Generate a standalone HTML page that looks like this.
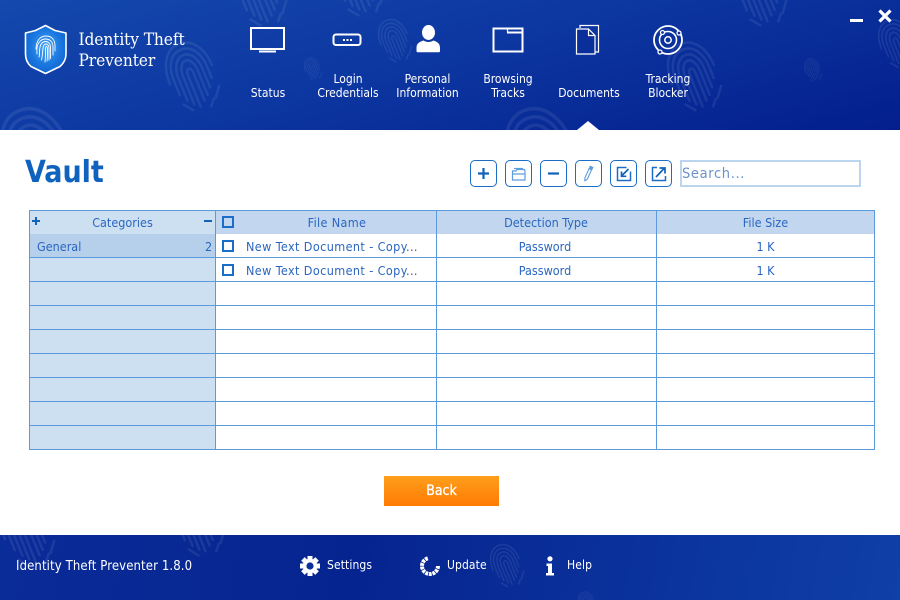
<!DOCTYPE html>
<html><head><meta charset="utf-8">
<style>
html,body{margin:0;padding:0}
body{width:900px;height:600px;position:relative;overflow:hidden;background:#fff;font-family:"DejaVu Sans","Liberation Sans",sans-serif;font-stretch:condensed}
.a{position:absolute}
#hd{left:0;top:0;width:900px;height:130px;background:linear-gradient(165deg,#1449ad 0%,#0c35a0 50%,#031f8c 100%);overflow:hidden}
#ft{left:0;top:535px;width:900px;height:65px;background:linear-gradient(100deg,#0a2c98 0%,#06248f 40%,#0f3fa8 100%);overflow:hidden}
.nav{position:absolute;color:#fff;font-size:12px;line-height:14px;text-align:center;width:90px}
.fl{color:#fff;font-size:12px;line-height:14px;position:absolute;letter-spacing:.1px}
.btn{position:absolute;top:160px;width:25px;height:25px;border:1.5px solid #1a6ec8;border-radius:5px;background:#fff}
.btn svg{position:absolute;left:0;top:0}
.t{position:absolute;color:#2a66c0;font-size:12.5px;line-height:24px;height:24px}
.c{text-align:center}
.h{position:absolute;background:#5b9bdc;height:1px;left:29px;width:846px}
.v{position:absolute;background:#5b9bdc;width:1px;top:210px;height:240px}
.cb{position:absolute;width:8px;height:8px;border:2px solid #1a6ec8;background:#fff}
</style></head><body>
<svg width="0" height="0" style="position:absolute"><defs>
<g id="fp" fill="none" stroke="#fff" stroke-width="2.500" stroke-linecap="round">
<g transform="rotate(-22 25 35)">
<path d="M3 36C3 16 12 2 26 2s23 14 23 32"/>
<path d="M8 50V34C8 18 15 8 26 8s18 11 18 26v12"/>
<path d="M13 58V34c0-11 5-20 13-20s13 9 13 20v20"/>
<path d="M18 64V34c0-7 3-14 8-14s8 7 8 14v26"/>
<path d="M23 68V34c0-7 6-7 6 0v30"/>
<path d="M40 66l8-10M33 72l5-6M8 60l7 9"/>
</g></g></defs></svg>

<svg class="a" style="left:0;top:130px" width="900" height="405" opacity="0.04">
<use href="#fp" transform="translate(0 258) scale(.8)"/>
<use href="#fp" transform="translate(170 370) scale(.9)"/>
<use href="#fp" transform="translate(285 18) scale(.5)"/>
<use href="#fp" transform="translate(95 165) scale(.6)"/>
<use href="#fp" transform="translate(100 250) scale(.8)"/>
<use href="#fp" transform="translate(370 340) scale(.5)"/>
<use href="#fp" transform="translate(480 260) scale(.8)"/>
<use href="#fp" transform="translate(650 200) scale(.8)"/>
<use href="#fp" transform="translate(735 20) scale(.5)"/>
<use href="#fp" transform="translate(815 340) scale(.8)"/>
<use href="#fp" transform="translate(545 30) scale(.5)"/>
<use href="#fp" transform="translate(825 60) scale(.7)"/>
</svg>

<div id="hd" class="a">
<svg class="a" style="left:0;top:0" width="900" height="130" opacity="0.075">
<use href="#fp" transform="translate(165 40)"/>
<use href="#fp" transform="translate(667 40)"/>
<use href="#fp" transform="translate(232 -45)"/>
<use href="#fp" transform="translate(732 -45)"/>
<use href="#fp" transform="translate(378 18) scale(.62)"/>
<use href="#fp" transform="translate(304 57) scale(.33)"/>
<use href="#fp" transform="translate(804 58) scale(.33)"/>
<use href="#fp" transform="translate(878 18) scale(.7)"/>
<use href="#fp" transform="translate(0 105) scale(1.4)"/>
<use href="#fp" transform="translate(505 105) scale(1.4)"/>
<use href="#fp" transform="translate(330 -55)"/>
</svg>

<svg class="a" style="left:24px;top:24px" width="44" height="52" viewBox="0 0 44 52">
<defs><radialGradient id="sg" cx=".5" cy=".45" r=".6"><stop offset="0" stop-color="#4aa6f6"/><stop offset=".6" stop-color="#1b78e0"/><stop offset="1" stop-color="#0f62cf"/></radialGradient></defs>
<path d="M21.500 1.500L31 6.500l11 2.500v21c0 5-2 9-6 12.500L21.500 49.500 7 42.500C3 39 1.500 35 1.500 30V9l10-2.500z" fill="url(#sg)" stroke="#fff" stroke-width="1.600" stroke-linejoin="round"/>
<g fill="none" stroke="#fff" stroke-width=".9" stroke-linecap="round">
<path d="M12 25c0-8 4-13 10-13s9 4 9 10v5"/><path d="M13 30c0-2-.300-4 0-6 .500-5 4-9 8.500-9s7.500 3 7.500 8v8"/><path d="M15 33c1-3 0-6 1-10s3-5.500 5.500-5.500 5 2 5 6v11"/><path d="M17.500 36c1-4 1-8 1.500-12s2-4 3-4 3 1 3 4v12"/><path d="M21 38c.500-4 .500-9 .500-13s2-3 2 0c0 5 0 9-.500 12"/>
</g></svg>
<div class="a" style="left:78.500px;top:30px;color:#fff;font:17.200px/21px 'DejaVu Serif','Liberation Serif',serif;font-stretch:condensed;white-space:nowrap;letter-spacing:-.1px">Identity Theft<br>Preventer</div>

<!-- Status -->
<svg class="a" style="left:250px;top:27px" width="36" height="26" viewBox="0 0 36 26"><rect x="1" y="1" width="33" height="21" fill="none" stroke="#fff" stroke-width="2"/><rect x="9" y="23.500" width="17" height="2" fill="#fff"/></svg>
<!-- Login -->
<svg class="a" style="left:332px;top:33px" width="32" height="14" viewBox="0 0 32 14"><rect x="1.500" y="1.500" width="27" height="10.500" rx="2.500" fill="none" stroke="#fff" stroke-width="2"/><rect x="11" y="6" width="2" height="2" fill="#fff"/><rect x="14.500" y="6" width="2" height="2" fill="#fff"/><rect x="18" y="6" width="2" height="2" fill="#fff"/></svg>
<!-- Person -->
<svg class="a" style="left:416px;top:24px" width="24" height="32" viewBox="0 0 24 32"><ellipse cx="12.500" cy="8.500" rx="6.500" ry="7.500" fill="#fff"/><path d="M0.500 24c0-5 3-6 7-7.500 3 2 7 2 10 0 4 1.500 6.500 3 6.500 7.500v3c0 .8-.5 1.300-1.500 1.300H2c-1 0-1.500-.5-1.500-1.300z" fill="#fff"/></svg>
<!-- Browsing -->
<svg class="a" style="left:492px;top:27px" width="32" height="26" viewBox="0 0 32 26"><path d="M1.500 1.500h29v23h-29z" fill="none" stroke="#fff" stroke-width="2"/><path d="M15 5.500h15" fill="none" stroke="#fff" stroke-width="2"/><path d="M15.500 2v3.500" stroke="#fff" stroke-width="1.200"/></svg>
<!-- Documents -->
<svg class="a" style="left:575px;top:24px" width="26" height="32" viewBox="0 0 26 32" fill="none" stroke="#fff" stroke-width="1.200"><path d="M5 4V1.500h18.500v26.500H20"/><path d="M1.500 5h12l6.500 6.500v18.500H1.500z" fill="#0a2f9b"/><path d="M13.500 5v6.500H20" /></svg>
<!-- Tracking -->
<svg class="a" style="left:652px;top:24px" width="32" height="32" viewBox="0 0 32 32" fill="none" stroke="#fff"><circle cx="16" cy="16" r="14" stroke-width="1.800"/><circle cx="16" cy="16" r="8.500" stroke-width="1.600"/><circle cx="16" cy="16" r="3.200" stroke-width="1.500"/><circle cx="10.500" cy="8.500" r="2" fill="#0c2f9a" stroke-width="1.300"/><circle cx="27" cy="9" r="2" fill="#0c2f9a" stroke-width="1.300"/><circle cx="8" cy="28" r="2" fill="#0c2f9a" stroke-width="1.300"/></svg>

<div class="nav" style="left:223px;top:86px">Status</div>
<div class="nav" style="left:303px;top:72px">Login<br>Credentials</div>
<div class="nav" style="left:382.500px;top:72px">Personal<br>Information</div>
<div class="nav" style="left:463px;top:72px">Browsing<br>Tracks</div>
<div class="nav" style="left:544px;top:86px">Documents</div>
<div class="nav" style="left:623px;top:72px">Tracking<br>Blocker</div>

<div class="a" style="left:850px;top:19px;width:13px;height:3px;background:#fff"></div>
<svg class="a" style="left:878px;top:9px" width="14" height="14" viewBox="0 0 14 14"><path d="M1.500 1.500l11 11M12.500 1.500l-11 11" stroke="#fff" stroke-width="3.200" fill="none"/></svg>
<div class="a" style="left:577px;top:121px;width:0;height:0;border-left:11px solid transparent;border-right:11px solid transparent;border-bottom:9px solid #fff"></div>
</div>

<div class="a" style="left:25px;top:153px;color:#0f62bd;font:bold 30px/40px 'DejaVu Sans','Liberation Sans',sans-serif;font-stretch:condensed">Vault</div>

<div class="btn" style="left:470px"><svg width="25" height="25" viewBox="0 0 25 25"><path d="M7 12.500h11M12.500 7v11" stroke="#1262b8" stroke-width="2.200"/></svg></div>
<div class="btn" style="left:505px"><svg width="25" height="25" viewBox="0 0 25 25" fill="none" stroke="#5f9cdc" stroke-width="1.200"><path d="M6.500 19V10h3.500l1-1.500h7.500l.5 1.500v9zM6.500 13h12.500"/><path d="M8 7.500h9"/></svg></div>
<div class="btn" style="left:540px"><svg width="25" height="25" viewBox="0 0 25 25"><path d="M7 12.500h11" stroke="#1262b8" stroke-width="2.200"/></svg></div>
<div class="btn" style="left:575px"><svg width="25" height="25" viewBox="0 0 25 25" fill="none" stroke="#5f9cdc" stroke-width="1.100"><path d="M9.500 19.500l-.8 .2.300-3 4-9 2.500 1.200-4 9z"/><path d="M13.500 7l.8-1.800 2.500 1.200-.8 1.800z" fill="#5f9cdc"/></svg></div>
<div class="btn" style="left:610px"><svg width="25" height="25" viewBox="0 0 25 25" fill="none" stroke="#1a6ec8" stroke-width="1.500"><path d="M15.500 6.500h-9v13h13v-9"/><path d="M17.500 8l-7 7M10.500 10.500v4.800h4.800" stroke="#1262b8" stroke-width="1.700"/></svg></div>
<div class="btn" style="left:645px"><svg width="25" height="25" viewBox="0 0 25 25" fill="none" stroke="#1a6ec8" stroke-width="1.500"><path d="M11 6.500H6.500v13h13V15"/><path d="M10 16l8-8.500M13.500 7H19v5.500" stroke="#1262b8" stroke-width="1.700"/></svg></div>

<div class="a" style="left:680px;top:160px;width:177px;height:23px;border:2px solid #bcd5ee;background:#fff;color:#6b93c9;font-size:14.500px;line-height:25px;box-sizing:content-box;letter-spacing:.65px">Search...</div>

<!-- table -->
<div class="a" style="left:29px;top:210px;width:186px;height:240px;background:#cde0f2"></div>
<div class="a" style="left:215px;top:210px;width:660px;height:24px;background:#c2d7ef"></div>
<div class="a" style="left:29px;top:234px;width:186px;height:24px;background:#b6d0ec"></div>
<div class="h" style="top:210px"></div>
<div class="h" style="top:257px"></div><div class="h" style="top:281px"></div><div class="h" style="top:305px"></div><div class="h" style="top:329px"></div><div class="h" style="top:353px"></div><div class="h" style="top:377px"></div><div class="h" style="top:401px"></div><div class="h" style="top:425px"></div><div class="h" style="top:449px"></div>
<div class="v" style="left:29px"></div><div class="v" style="left:215px"></div><div class="v" style="left:436px"></div><div class="v" style="left:656px"></div><div class="v" style="left:874px"></div>

<svg class="a" style="left:32px;top:217px" width="9" height="9"><path d="M0 4h8M4 0v8" stroke="#1262b8" stroke-width="2"/></svg>
<div class="a" style="left:204px;top:220px;width:8px;height:2px;background:#1262b8"></div>
<div class="t c" style="left:30px;top:211px;width:185px">Categories</div>
<div class="t" style="left:37px;top:235px">General</div>
<div class="t" style="left:205px;top:235px">2</div>

<div class="cb" style="left:222px;top:216px;background:transparent"></div>
<div class="t c" style="left:216px;top:211px;width:242px;letter-spacing:.35px">File Name</div>
<div class="t c" style="left:437px;top:211px;width:218px">Detection Type</div>
<div class="t c" style="left:657px;top:211px;width:217px">File Size</div>

<div class="cb" style="left:222px;top:240px"></div>
<div class="t" style="left:246px;top:235px;white-space:nowrap;letter-spacing:.4px">New Text Document - Copy...</div>
<div class="t c" style="left:437px;top:235px;width:216px">Password</div>
<div class="t c" style="left:657px;top:235px;width:217px">1 K</div>
<div class="cb" style="left:222px;top:264px"></div>
<div class="t" style="left:246px;top:259px;white-space:nowrap;letter-spacing:.4px">New Text Document - Copy...</div>
<div class="t c" style="left:437px;top:259px;width:216px">Password</div>
<div class="t c" style="left:657px;top:259px;width:217px">1 K</div>

<div class="a" style="left:384px;top:476px;width:115px;height:30px;background:linear-gradient(#ff9f1c,#ff7a02);color:#fff;font-size:14px;-webkit-text-stroke:.3px #fff;line-height:30px;text-align:center">Back</div>

<div id="ft" class="a">
<svg class="a" style="left:0;top:0" width="900" height="65" opacity="0.08"><use href="#fp" transform="translate(490 8) scale(.62)"/><use href="#fp" transform="translate(578 56) scale(.33)"/><use href="#fp" transform="translate(0 -40)"/><use href="#fp" transform="translate(170 -50)"/></svg>
<div class="fl" style="left:16px;top:25px;font-size:13px;letter-spacing:.12px;white-space:nowrap">Identity Theft Preventer 1.8.0</div>
<svg class="a" style="left:300px;top:21px" width="20" height="20" viewBox="0 0 20 20"><g fill="#fff"><circle cx="10" cy="10" r="7.300"/><g id="gt"><rect x="7.500" y="0" width="5" height="20"/><rect x="0" y="7.500" width="20" height="5"/><rect x="7.500" y="0" width="5" height="20" transform="rotate(45 10 10)"/><rect x="7.500" y="0" width="5" height="20" transform="rotate(-45 10 10)"/></g></g><circle cx="10" cy="10" r="3.600" fill="#0b2f9b"/></svg>
<svg class="a" style="left:420px;top:21px" width="20" height="20" viewBox="0 0 20 20" fill="none" stroke="#fff" stroke-width="4"><circle cx="10" cy="10" r="8" stroke-dasharray="2.800 .8 2.800 .8 2.800 .8 2.800 .8 2.800 .8 2.800 .8 2.800 .8 2.800 .8 2.800 .8 2.800 .8 0 14"/></svg>
<svg class="a" style="left:545px;top:21px" width="10" height="20" viewBox="0 0 10 20" fill="#fff"><circle cx="5" cy="2.800" r="2.600"/><path d="M1.500 7.500H7v9.500h2v2.500H1v-2.500h2V10H1.500z"/></svg>
<div class="fl" style="left:327px;top:23px">Settings</div>
<div class="fl" style="left:447px;top:23px">Update</div>
<div class="fl" style="left:567px;top:23px">Help</div>
</div>
</body></html>
